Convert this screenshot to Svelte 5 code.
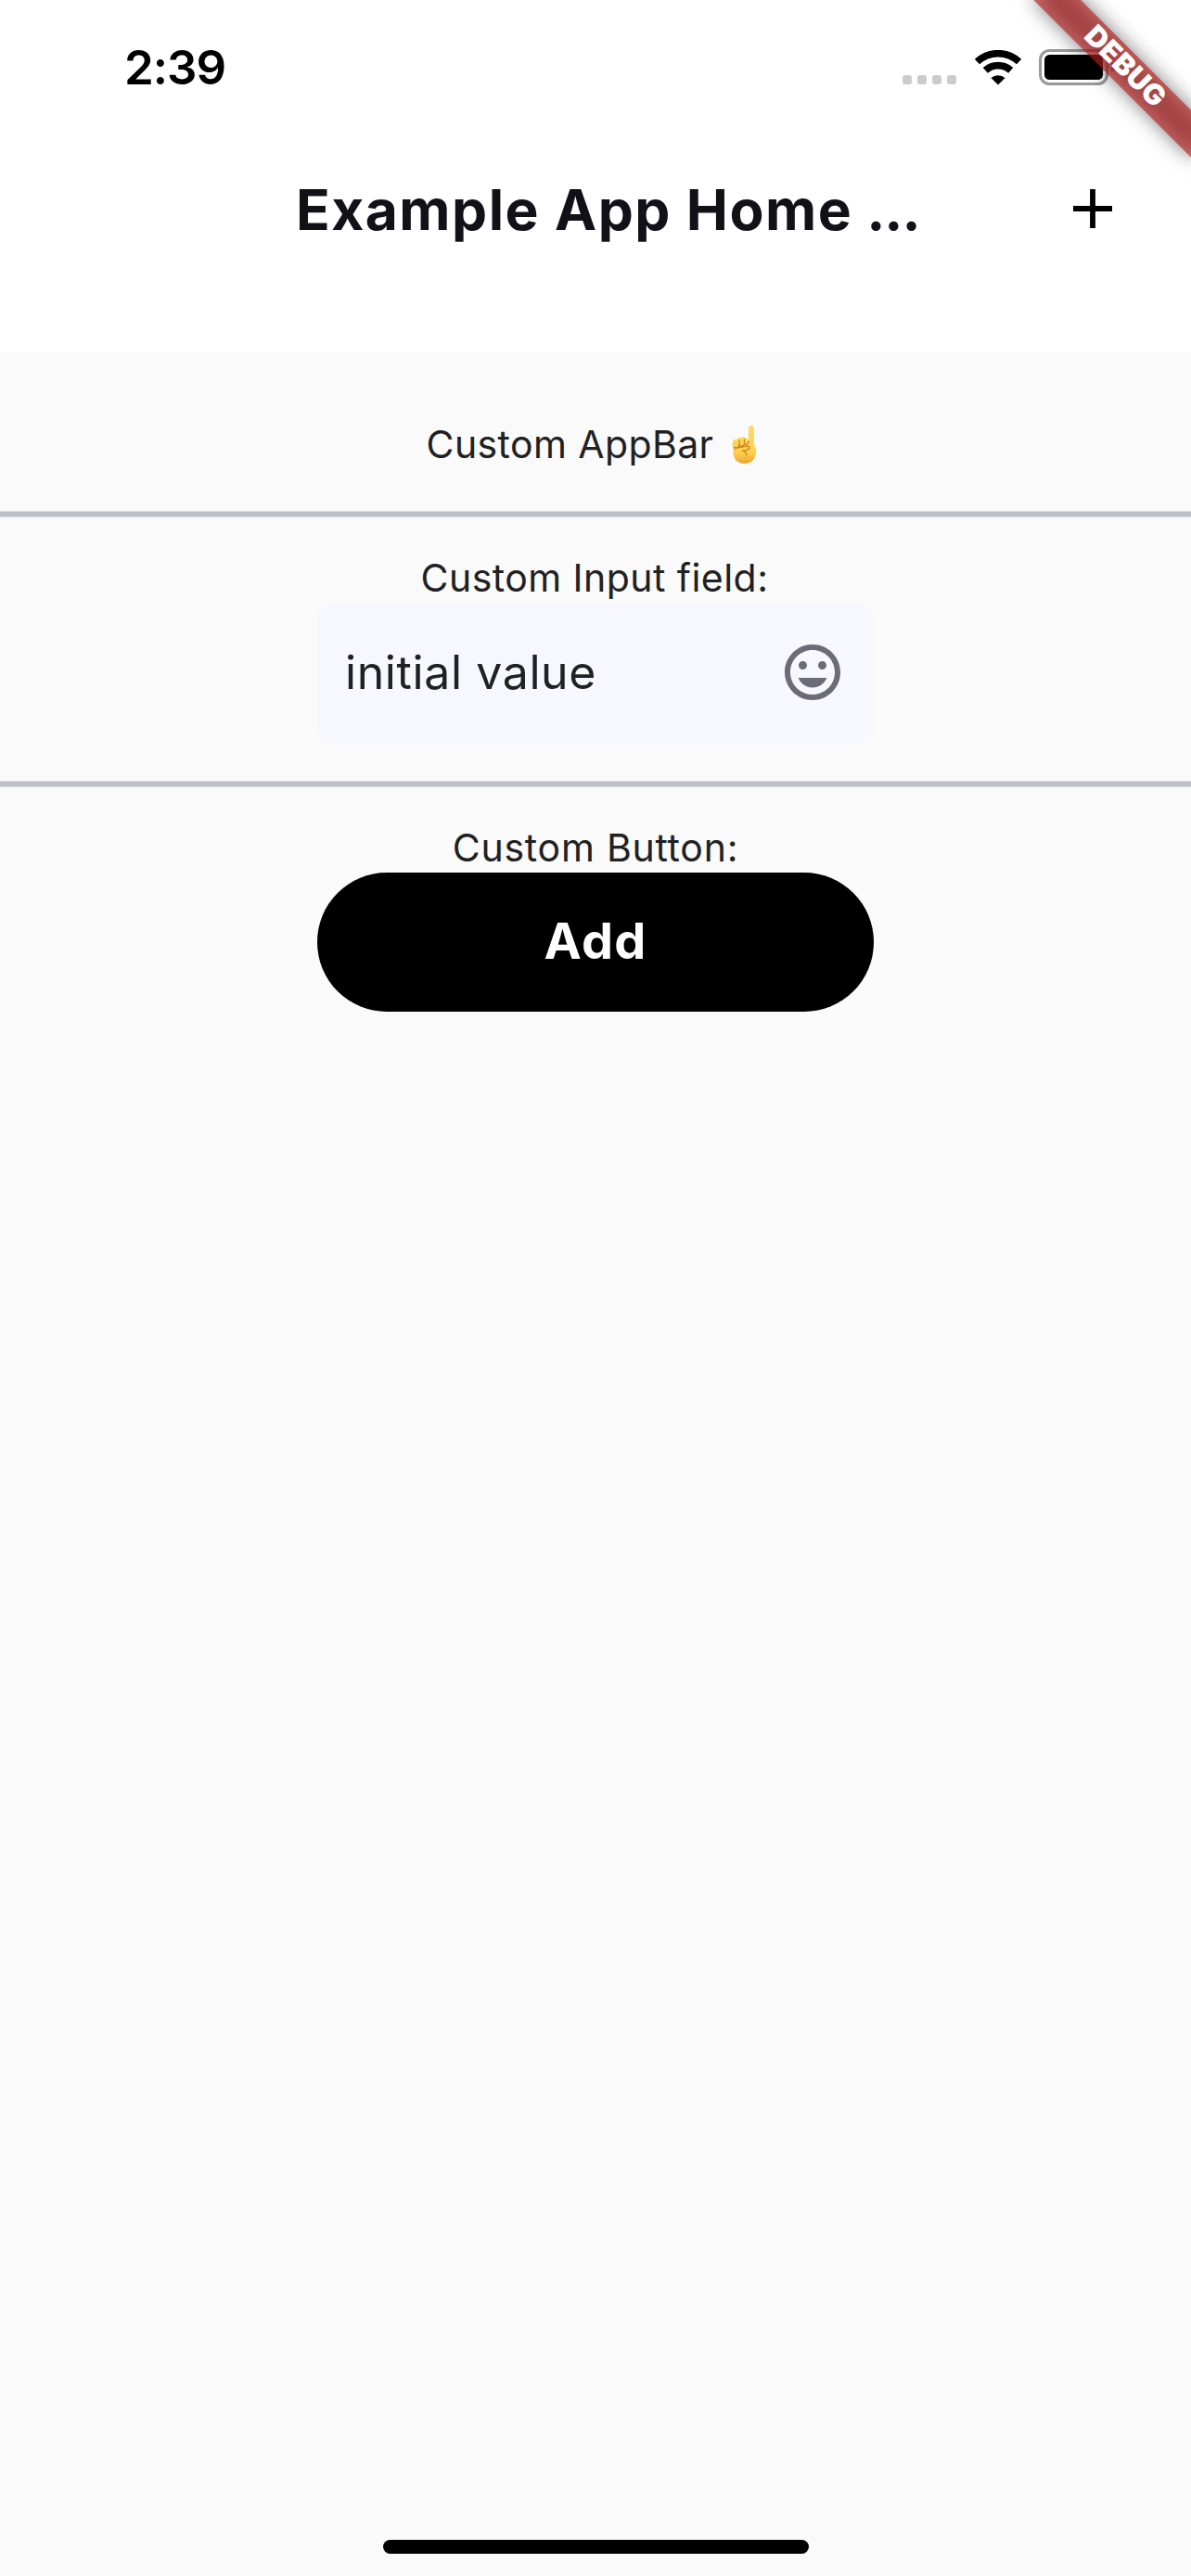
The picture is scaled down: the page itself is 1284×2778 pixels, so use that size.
<script>
  const title = 'Example App Home';
  let value = $state('initial value');
</script>

<div class="screen">
  <header>
    <div class="status">
      <span class="time">2:39</span>
      <div class="indicators">
        <svg class="cell" width="58" height="10" viewBox="0 0 58 10" fill="#cbcbcb">
          {#each [0, 16, 32, 48] as x}
            <rect {x} y="0" width="10" height="10" rx="3" />
          {/each}
        </svg>
        <svg width="52" height="38" viewBox="0 0 52 38">
          <g fill="none" stroke="#000" stroke-width="7.6">
            <path d="M3.4 12.6A33 33 0 0 1 48.6 12.6" />
            <path d="M12.3 21.9A20.3 20.3 0 0 1 39.7 21.9" />
          </g>
          <path d="M26 37.5L18.4 30A11.6 11.6 0 0 1 33.6 30Z" />
        </svg>
        <svg width="83" height="39" viewBox="0 0 83 39">
          <rect x="1.5" y="1.5" width="72" height="36" rx="10" fill="none" stroke="#999" stroke-width="3" />
          <rect x="6" y="6" width="63" height="27" rx="5.5" />
          <path d="M78 14q4.500 1.500 4.500 5.500t-4.500 5.500z" fill="#999" />
        </svg>
      </div>
    </div>
    <div class="appbar">
      <h1>{title} <span class="dots">...</span></h1>
      <button class="plus" aria-label="Add item">
        <svg width="42" height="42" viewBox="0 0 42 42"><path d="M18.100 0h5.800v18.100H42v5.800H23.900V42h-5.800V23.900H0v-5.800h18.100z" /></svg>
      </button>
    </div>
  </header>

  <main>
    <section class="first">
      <p class="label one">
        <span>Custom AppBar</span>
        <svg width="28" height="43" viewBox="0 0 28 43" role="img" aria-label="Pointing up">
          <defs>
            <linearGradient id="skin" x1="0" y1="0" x2="0" y2="1">
              <stop offset="0" stop-color="#ffdc6b" />
              <stop offset=".72" stop-color="#ffcf4d" />
              <stop offset="1" stop-color="#e9a32f" />
            </linearGradient>
          </defs>
          <path d="M18 17V4Q18 1 21 1T24 4V22Q27 26 26 31Q24 42 14 42Q5 42 2 34Q1 31 1.500 25Q0 22 1 18Q2 15 6 16Q7 13 10 14Q14 12 15 15Q17 14 18 17Z" fill="url(#skin)" />
          <path d="M2 24Q7 26 8 22V17M8 22Q12 25 13.500 21V16M13.500 21Q17 23 18 18M3 26Q7 24 12 24Q19 22 19 25Q18 28 11 28Q16 29 16 33" fill="none" stroke="#c98520" stroke-width="1.300" stroke-linecap="round" />
        </svg>
      </p>
    </section>
    <hr />
    <section class="second">
      <p class="label two">Custom Input field:</p>
      <div class="field">
        <input bind:value aria-label="Custom input" />
        <svg width="72" height="72" viewBox="0 0 24 24" fill="#6d6b78"><path d="M11.990 2C6.470 2 2 6.480 2 12s4.470 10 9.990 10C17.520 22 22 17.520 22 12S17.520 2 11.990 2zM12 20c-4.420 0-8-3.580-8-8s3.580-8 8-8 8 3.580 8 8-3.580 8-8 8zm3.500-9c.83 0 1.500-.67 1.500-1.500S16.330 8 15.500 8 14 8.670 14 9.500s.67 1.500 1.500 1.500zm-7 0c.83 0 1.500-.67 1.500-1.500S9.330 8 8.500 8 7 8.670 7 9.500 7.670 11 8.500 11zm3.500 6.500c2.330 0 4.310-1.460 5.110-3.500H6.890c.8 2.040 2.780 3.500 5.110 3.500z" /></svg>
      </div>
    </section>
    <hr />
    <section class="third">
      <p class="label three">Custom Button:</p>
      <button class="add">Add</button>
    </section>
  </main>
  <div class="home"></div>

  <svg class="banner" width="240" height="240" viewBox="-240 0 240 240">
    <defs>
      <filter id="soft" x="-50%" y="-150%" width="200%" height="400%"><feGaussianBlur stdDeviation="10.9" /></filter>
    </defs>
    <g transform="rotate(45)">
      <rect x="-120" y="84" width="240" height="36" fill="#000" fill-opacity=".5" filter="url(#soft)" />
      <rect x="-120" y="84" width="240" height="36" fill="#b71c1c" fill-opacity=".627" />
      <text x="-54" y="111" textLength="109" lengthAdjust="spacingAndGlyphs">DEBUG</text>
    </g>
  </svg>
</div>

<style>
  :global(body) { margin: 0; background: #fafafa; }
  .screen {
    position: relative;
    width: 1284px;
    height: 2778px;
    display: flex;
    flex-direction: column;
    overflow: hidden;
    background: #fafafa;
    font-family: Inter, "Liberation Sans", sans-serif;
    color: #212121;
  }
  button { border: 0; padding: 0; font: inherit; }
  svg { display: block; flex: none; }
  header { height: 380px; background: #fff; }
  .status {
    height: 145px;
    box-sizing: border-box;
    padding: 0 81px 0 134px;
    display: flex;
    justify-content: space-between;
    align-items: center;
  }
  .time { font-size: 51px; font-weight: 600; color: #000; letter-spacing: -1px; }
  .indicators { display: flex; align-items: center; }
  .indicators svg + svg { margin-left: 18.500px; }
  .indicators .cell { margin: 27px 0 0; }
  .appbar {
    height: 160px;
    box-sizing: border-box;
    padding: 0 85px 0 319px;
    display: flex;
    align-items: center;
    justify-content: space-between;
  }
  h1 { margin: 0; padding-top: 2px; font-size: 60.500px; font-weight: 700; color: #121118; letter-spacing: 1.500px; white-space: nowrap; }
  .dots { margin-left: -1px; letter-spacing: -1px; }
  .plus { background: none; }
  section { display: flex; flex-direction: column; align-items: center; }
  .first { padding: 72px 0 45px; }
  .second { padding: 38px 0 41px; }
  .third { padding-top: 38px; }
  hr { box-sizing: border-box; width: 100%; height: 7px; margin: 0; border: solid #d9dade; border-width: 1px 0; background: #bcbfc6; }
  .label { margin: 0; height: 54px; display: flex; align-items: center; font-size: 41px; line-height: 54px; letter-spacing: 0.750px; white-space: nowrap; }
  .one { letter-spacing: 0.400px; }
  .one svg { margin: 0 7px 0 20px; }
  .two { padding: 0 2px 1px 0; letter-spacing: 0.450px; }
  .field {
    width: 600px;
    height: 150px;
    box-sizing: border-box;
    padding: 0 30px 2px;
    display: flex;
    align-items: center;
    border-radius: 15px;
    background: #f7f7ff;
  }
  input {
    flex: 1;
    min-width: 0;
    padding: 0;
    border: 0;
    outline: 0;
    background: none;
    color: inherit;
    font: 400 50px Inter, "Liberation Sans", sans-serif;
    letter-spacing: 0.600px;
  }
  .add { width: 600px; height: 150px; padding-bottom: 3px; border-radius: 75px; background: #000; color: #fff; font-size: 54px; font-weight: 700; letter-spacing: 1.200px; }
  .home { width: 459px; height: 15px; margin: auto auto 24px; border-radius: 8px; background: #000; }
  .banner { position: absolute; top: 0; right: 0; }
  text { font-family: Inter, sans-serif; font-size: 30.600px; font-weight: 900; fill: #fff; }
</style>
